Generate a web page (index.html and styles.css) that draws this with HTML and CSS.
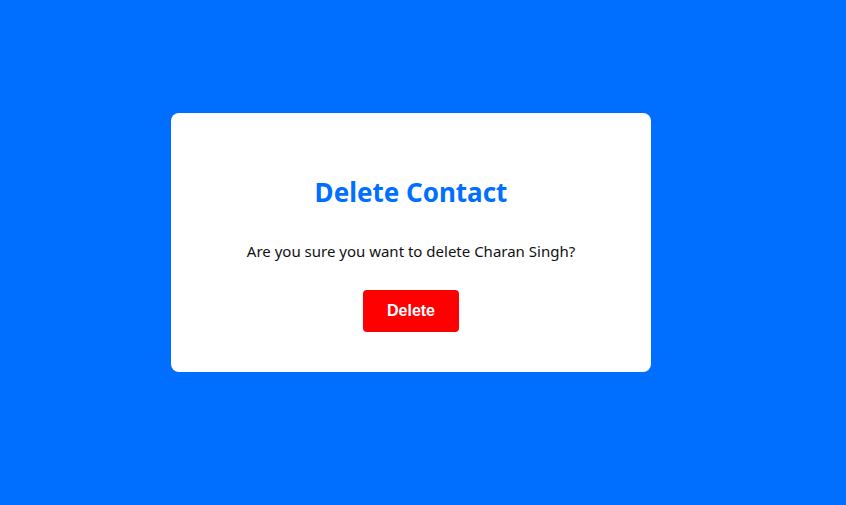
FILE: index.html
```html
<!DOCTYPE html>
<html lang="en">
<head>
<meta charset="utf-8">
<title>Delete Contact</title>
<link rel="stylesheet" href="styles.css">
</head>
<body>
<div class="page">
  <div class="card">
    <h2 class="title">Delete Contact</h2>
    <p class="message">Are you sure you want to delete Charan Singh?</p>
    <button class="delete-btn">Delete</button>
  </div>
</div>
</body>
</html>
```
FILE: styles.css
```css
html, body {
  margin: 0;
  padding: 0;
}
body {
  background: #006fff;
  font-family: "Noto Sans", "Open Sans", sans-serif;
}
.page {
  box-sizing: border-box;
  min-height: 100vh;
  padding: 0 24px 20px 0;
  display: flex;
  align-items: center;
  justify-content: center;
}
.card {
  box-sizing: border-box;
  width: 480px;
  background: #ffffff;
  border-radius: 8px;
  padding: 40px 30px 40px;
  display: flex;
  flex-direction: column;
  align-items: center;
}
.title {
  margin: 24px 0 0;
  font-size: 26px;
  line-height: 31px;
  font-weight: 700;
  color: #006fff;
}
.message {
  margin: 32px 0 0;
  font-size: 15px;
  line-height: 22px;
  color: #111111;
}
.delete-btn {
  margin-top: 28px;
  width: 96px;
  height: 42px;
  border: none;
  border-radius: 4px;
  background: #ff0000;
  color: #ffffff;
  font-family: "Liberation Sans", Arial, sans-serif;
  font-weight: 700;
  font-size: 16px;
  cursor: pointer;
}
```
